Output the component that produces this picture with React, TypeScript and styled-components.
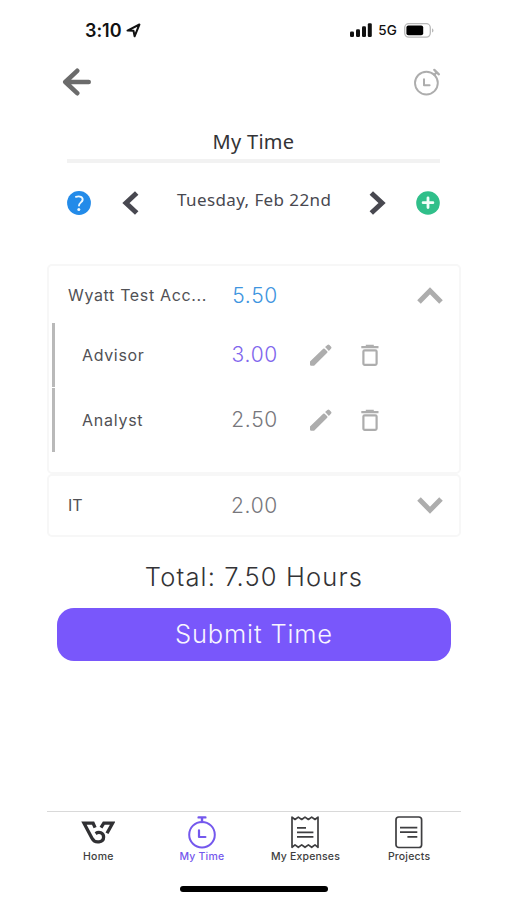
import React from "react";
import styled, { createGlobalStyle } from "styled-components";

const GlobalStyle = createGlobalStyle`
  * { box-sizing: border-box; }
  html, body { margin: 0; padding: 0; background: #fff; }
  button { border: 0; padding: 0; background: none; display: flex; color: inherit; font: inherit; }
  svg { display: block; flex: none; }
`;

const Screen = styled.div`
  width: 414px;
  height: 900px;
  margin-left: 47px;
  display: flex;
  flex-direction: column;
  overflow: hidden;
  background: #fff;
  font-family: Inter, sans-serif;
  color: #444448;
`;

const StatusBar = styled.div`
  height: 60px;
  padding: 0 27px 0 38px;
  display: flex;
  justify-content: space-between;
  align-items: center;
  color: #111;
`;

const StatusGroup = styled.div`
  display: flex;
  align-items: center;
`;

const Clock = styled.span`
  font: 600 18px/24px Inter, sans-serif;
  letter-spacing: -0.05px;
  margin: 1px 5px 0 0;
`;

const Network = styled.span`
  font: 500 13.5px/20px Inter, sans-serif;
  margin: 0 7px 0 6px;
  letter-spacing: 0.2px;
`;

const Header = styled.header`
  height: 44px;
  padding: 0 20px 0 15px;
  display: flex;
  align-items: center;
  justify-content: space-between;
`;

const Title = styled.h1`
  margin: 24px 21px 0 20px;
  height: 35px;
  border-bottom: 4px solid #f2f2f2;
  text-align: center;
  font: 400 20px/28px "Noto Sans", sans-serif;
  letter-spacing: 0.3px;
  color: #333336;
`;

const DateBar = styled.div`
  height: 80px;
  padding: 0 20px;
  display: grid;
  grid-template-columns: 25px 85px 154px 85px 25px;
  align-items: center;
  color: #484850;
`;

const DateLabel = styled.span`
  font: 400 17px/24px "Noto Sans", sans-serif;
  letter-spacing: 0.4px;
  white-space: nowrap;
  padding-bottom: 7px;
`;

const ArrowSlot = styled.div<{ $end?: boolean }>`
  display: flex;
  padding-left: ${(p) => (p.$end ? "38px" : "30px")};
`;

const Card = styled.section<{ $height: number; $gap: number }>`
  height: ${(p) => p.$height}px;
  margin-top: ${(p) => p.$gap}px;
  border: 2px solid #f7f7f7;
  border-radius: 5px;
`;

const Row = styled.div`
  height: 57px;
  padding: 2px 0 0 19px;
  display: grid;
  grid-template-columns: 140px 70px 1fr 59px;
  align-items: center;
  justify-items: center;
  color: #adadad;
`;

const SubRow = styled.div`
  height: 64px;
  margin: 0 0 1px 3px;
  padding-left: 27px;
  border-left: 3px solid #b9b9b9;
  display: grid;
  grid-template-columns: 126px 70px 86px 11px;
  align-items: center;
  justify-items: center;
  color: #adadad;
`;

const RowName = styled.span<{ $spacing: number }>`
  justify-self: start;
  font-size: 16px;
  font-weight: 400;
  line-height: 22px;
  letter-spacing: ${(p) => p.$spacing}px;
  color: #515155;
  white-space: nowrap;
  padding-bottom: 1px;
`;

const Hours = styled.span<{ $tone: string }>`
  justify-self: end;
  font-size: 21px;
  font-weight: 350;
  line-height: 26px;
  letter-spacing: 0.7px;
  color: ${(p) => p.$tone};
`;

const Total = styled.div`
  height: 71px;
  padding-top: 22px;
  text-align: center;
  font-size: 25.5px;
  font-weight: 330;
  line-height: 36px;
  letter-spacing: 1.15px;
  color: #333336;
`;

const Submit = styled.button`
  && {
    height: 53px;
    margin: 0 10px;
    padding-bottom: 1px;
    border-radius: 17px;
    background: #7957fb;
    color: #f8f5ff;
    align-items: center;
    justify-content: center;
    font: 330 25.5px/36px Inter, sans-serif;
    letter-spacing: 0.85px;
  }
`;

const Nav = styled.nav`
  margin-top: 150px;
  height: 60px;
  border-top: 1px solid #d9d9d9;
  display: grid;
  grid-template-columns: repeat(4, 103.6px);
`;

const NavItem = styled.div<{ $active?: boolean }>`
  display: flex;
  flex-direction: column;
  align-items: center;
  padding: 4px 1px 0 0;
  gap: 1px;
  color: ${(p) => (p.$active ? "#7458ed" : "#3e3e40")};
  font: 500 10.5px/14px Inter, sans-serif;
  letter-spacing: 0.18px;
`;

const HomeIndicator = styled.div`
  width: 148px;
  height: 6px;
  margin: 15px auto 0;
  border-radius: 3px;
  background: #000;
`;

const Chevron = ({ d, w, h, stroke = 5 }: { d: string; w: number; h: number; stroke?: number }) => (
  <svg width={w} height={h} viewBox={`0 0 ${w} ${h}`} fill="none" stroke="currentColor" strokeWidth={stroke}>
    <path d={d} />
  </svg>
);

const LocationIcon = () => (
  <svg width="15" height="15" viewBox="0 0 15 15" fill="none" stroke="currentColor" strokeWidth="2" strokeLinejoin="round">
    <path d="M1.5 7.6 13.4 1.5 8.6 13.3 7.5 7.8Z" />
  </svg>
);

const SignalIcon = () => (
  <svg width="22" height="14" viewBox="0 0 22 14" fill="currentColor">
    <rect x="0" y="8.5" width="4" height="5.5" rx="1.3" />
    <rect x="6" y="6.3" width="4" height="7.7" rx="1.3" />
    <rect x="12" y="3.3" width="4" height="10.7" rx="1.3" />
    <rect x="17.8" y="0.2" width="4" height="13.8" rx="1.3" />
  </svg>
);

const BatteryIcon = () => (
  <svg width="30" height="15" viewBox="0 0 30 15">
    <rect x="0.7" y="0.7" width="25.6" height="13.4" rx="4" fill="none" stroke="#b9b9b9" strokeWidth="1.3" />
    <rect x="2.4" y="2.5" width="16.8" height="9.8" rx="2" fill="#000" />
    <path d="M28 5.2c2 .9 2 3.5 0 4.4Z" fill="#b9b9b9" />
  </svg>
);

const BackIcon = () => (
  <svg width="30" height="28" viewBox="0 0 30 28" fill="none" stroke="#6b6b6b" strokeWidth="4.6" strokeLinecap="round" strokeLinejoin="round">
    <path d="M15.2 2.8 3.3 14l11.9 11.2M3.3 14h23.4" />
  </svg>
);

const TimerIcon = () => (
  <svg width="27" height="28" viewBox="0 0 27 28" fill="none" stroke="#adadad" strokeWidth="1.9" strokeLinecap="round" strokeLinejoin="round">
    <circle cx="12.4" cy="15.1" r="11.4" />
    <path d="M10 11.2v6.1h5.6" strokeWidth="2" />
    <path d="m20.3 6.8 2.2-2.3M20.3 1.9l4.6 4.4" strokeWidth="2.3" />
  </svg>
);

const HelpIcon = () => (
  <svg width="24" height="24" viewBox="0 0 24 24">
    <circle cx="12" cy="12" r="11.9" fill="#238be9" />
    <path d="M8.9 5.8c4.1-1.2 7.1.2 6.7 3.2-.3 2.2-3.6 2.8-3.6 5.5" fill="none" stroke="#eef9ff" strokeWidth="1.9" strokeLinecap="round" />
    <circle cx="11.8" cy="18.5" r="1.5" fill="#eef9ff" />
  </svg>
);

const AddIcon = () => (
  <svg width="24" height="24" viewBox="0 0 24 24">
    <circle cx="12" cy="12" r="11.8" fill="#30bf8a" />
    <path d="M12 6.8v9.8M7.1 11.7h9.8" fill="none" stroke="#f1fff9" strokeWidth="2.8" strokeLinecap="round" />
  </svg>
);

const PencilIcon = () => (
  <svg width="22" height="22" viewBox="0 0 22 22" fill="currentColor">
    <path d="M0 17.5 13.2 4.7q.8-.6 1.5.1l2.5 2.5q.7.8 0 1.5L4.1 21.7H1.2Q0 21.7 0 20.4ZM15.1 3.1l2.3-2.2q1-.9 2 0l1.7 1.8q.9 1 0 1.9L18.9 6.9Z" />
  </svg>
);

const TrashIcon = () => (
  <svg width="18" height="22" viewBox="0 0 18 22" fill="none" stroke="currentColor" strokeWidth="2.2">
    <path d="M.3 3.2h17.2M4.8 1.8h8" />
    <rect x="2.4" y="6.3" width="13.2" height="14.5" rx="1.3" />
  </svg>
);

const LogoIcon = () => (
  <svg width="34" height="33" viewBox="0 0 34 33" fill="none" stroke="#303033" strokeWidth="3.3">
    <path d="M14.1 11.6 12.1 7.2H3L11 22.2C14 28 22.6 26.6 22.6 21C22.6 16.8 18 15.2 14.6 17.6" />
    <path d="M20 11.6 22.8 7.2H31.6L26 17.3" />
  </svg>
);

const StopwatchIcon = () => (
  <svg width="34" height="33" viewBox="0 0 34 33" fill="none" stroke="currentColor" strokeWidth="2" strokeLinecap="round" strokeLinejoin="round">
    <circle cx="17" cy="18.7" r="12.8" />
    <path d="M17 6V1.8M13.6 1.4h6.8" strokeWidth="2.4" />
    <path d="M14 14.3V21h6.4" strokeWidth="2.2" />
  </svg>
);

const ReceiptIcon = () => (
  <svg width="34" height="33" viewBox="0 0 34 33" fill="none" stroke="currentColor" strokeWidth="1.7" strokeLinejoin="round">
    <path d="M4 1.1 7 3.5l3.3-2.4 3.4 2.4L17 1.1l3.4 2.4 3.3-2.4L27 3.5l3-2.4v30.2l-3-2.4-3.3 2.4-3.3-2.4-3.4 2.4-3.3-2.4-3.4 2.4L7 28.9l-3 2.4Z" />
    <path d="M9 11.9h9M9 16.4h16.4M9 20.8h16.4" strokeWidth="1.8" />
  </svg>
);

const DocumentIcon = () => (
  <svg width="34" height="33" viewBox="0 0 34 33" fill="none" stroke="currentColor" strokeWidth="1.7">
    <rect x="4" y="1" width="25.6" height="30.5" rx="2.8" />
    <path d="M8 11.6h17.3M8 16.2h17.3M15.4 20.8h9.9" strokeWidth="1.8" />
  </svg>
);

const tasks = [
  { name: "Advisor", hours: "3.00", tone: "#8066ed", spacing: 0.65 },
  { name: "Analyst", hours: "2.50", tone: "#77777c", spacing: 0.75 },
];

const tabs = [
  { label: "Home", icon: <LogoIcon /> },
  { label: "My Time", icon: <StopwatchIcon />, active: true },
  { label: "My Expenses", icon: <ReceiptIcon /> },
  { label: "Projects", icon: <DocumentIcon /> },
];

export default function App() {
  return (
    <>
      <GlobalStyle />
      <Screen>
        <StatusBar>
          <StatusGroup>
            <Clock>3:10</Clock>
            <LocationIcon />
          </StatusGroup>
          <StatusGroup>
            <SignalIcon />
            <Network>5G</Network>
            <BatteryIcon />
          </StatusGroup>
        </StatusBar>
        <Header>
          <button aria-label="Back"><BackIcon /></button>
          <button aria-label="Start timer"><TimerIcon /></button>
        </Header>
        <Title>My Time</Title>
        <DateBar>
          <button aria-label="Help"><HelpIcon /></button>
          <ArrowSlot><Chevron w={17} h={24} d="M14.7 2 4 12l10.7 10" /></ArrowSlot>
          <DateLabel>Tuesday, Feb 22nd</DateLabel>
          <ArrowSlot $end><Chevron w={17} h={24} d="M2.3 2 13 12 2.3 22" /></ArrowSlot>
          <button aria-label="Add entry"><AddIcon /></button>
        </DateBar>
        <Card $height={210} $gap={21}>
          <Row>
            <RowName $spacing={0.65}>Wyatt Test Acc...</RowName>
            <Hours $tone="#3e95e0">5.50</Hours>
            <span />
            <Chevron w={26} h={17} d="M2 15 13 3.8 24 15" />
          </Row>
          {tasks.map((t) => (
            <SubRow key={t.name}>
              <RowName $spacing={t.spacing}>{t.name}</RowName>
              <Hours $tone={t.tone}>{t.hours}</Hours>
              <PencilIcon />
              <TrashIcon />
            </SubRow>
          ))}
        </Card>
        <Card $height={63} $gap={0}>
          <Row>
            <RowName $spacing={0}>IT</RowName>
            <Hours $tone="#77777c">2.00</Hours>
            <span />
            <Chevron w={26} h={17} d="M2 2 13 13.2 24 2" />
          </Row>
        </Card>
        <Total>Total: 7.50 Hours</Total>
        <Submit>Submit Time</Submit>
        <Nav>
          {tabs.map((t) => (
            <NavItem key={t.label} $active={t.active}>
              {t.icon}
              <span>{t.label}</span>
            </NavItem>
          ))}
        </Nav>
        <HomeIndicator />
      </Screen>
    </>
  );
}
